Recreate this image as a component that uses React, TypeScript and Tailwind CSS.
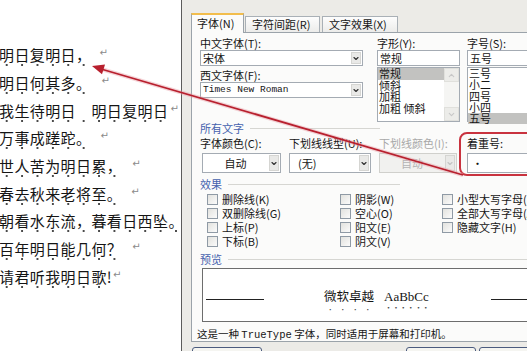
import React from 'react';
import { ChevronDown, ChevronUp } from 'lucide-react';

const poem = [
  { t: '明日复明日，', g: 'ml-[8px]' },
  { t: '明日何其多。', g: 'ml-[10px]' },
  { t: '我生待明日　明日复明日', g: 'ml-[2px]' },
  { t: '万事成蹉跎。', g: 'ml-[9px]' },
  { t: '世人苦为明日累，', g: 'ml-[10px]' },
  { t: '春去秋来老将至。', g: 'ml-[9px]' },
  { t: '朝看水东流，暮看日西坠。', g: 'hidden' },
  { t: '百年明日能几何？', g: 'ml-[10px]' },
  { t: '请君听我明日歌!', g: 'ml-[1px]' },
];

const dots = '[text-emphasis:filled_dot_#3a3a3a] [text-emphasis-position:under_right]';

const Arrow = ({ gray }: { gray?: boolean }) => (
  <div className="w-[10px] m-px flex items-center justify-center bg-[#e9e9e7] border border-[#d5d5d2]">
    <ChevronDown size={9} strokeWidth={3.5} color={gray ? '#c4c4c4' : '#333'} />
  </div>
);

const Check = ({ label }: { label: string }) => (
  <div className="flex items-center h-[14px] whitespace-nowrap">
    <span className="w-[11px] h-[11px] shrink-0 border border-[#8f9aa5] bg-linear-to-br from-[#e2e2de] to-[#fbfbfb]" />
    <span className="ml-[4px] text-[11px] leading-[14px]">{label}</span>
  </div>
);

const Group = ({ label }: { label: string }) => (
  <div className="flex items-center h-[14px]">
    <span className="text-[11px] text-[#4562ae]">{label}</span>
    <span className="flex-1 ml-[6px] h-px bg-[#d6d6d2]" />
  </div>
);

export default function App() {
  return (
    <div className="relative w-[527px] h-[351px] overflow-hidden flex bg-white text-[#151515] font-['Noto_Sans_CJK_SC','Noto_Sans',sans-serif]">
      {/* document */}
      <div className="w-[182px] shrink-0 pt-[43px] -ml-[1px] text-[15px] tracking-[0.4px]">
        {poem.map((l) => (
          <div key={l.t} className="h-[27.7px] whitespace-nowrap flex items-center">
            <span className="inline-block leading-[18px] pb-[3px] bg-[radial-gradient(circle,#4a4a4a_1px,transparent_1.4px)] bg-size-[15.4px_4px] bg-repeat-x bg-[position:0_100%]">{l.t}</span>
            <span className={`${l.g} -mt-[8px] text-[10px] text-[#8a8a8a] font-['DejaVu_Sans',sans-serif]`}>↵</span>
          </div>
        ))}
      </div>

      {/* dialog */}
      <div className="flex-1 flex flex-col bg-[#ecebe7] border-l border-[#5c5c5c] pl-[9px]">
        <div className="h-[13px] shrink-0" />
        <div className="flex items-end h-[19px] shrink-0 text-[11px] whitespace-nowrap">
          <div className="relative z-10 -mb-px w-[53px] h-[20px] border border-b-0 border-t-2 border-[#9ba3aa] border-t-[#f2bd4c] bg-[#fbfbfa] pl-[5px] leading-[16px]">字体(N)</div>
          <div className="ml-px w-[75px] h-[16px] border border-b-0 border-[#a9b0b6] bg-linear-to-b from-[#fdfdfd] to-[#ececea] pl-[6px] leading-[15px]">字符间距(R)</div>
          <div className="ml-[2px] w-[76px] h-[16px] border border-b-0 border-[#a9b0b6] bg-linear-to-b from-[#fdfdfd] to-[#ececea] pl-[6px] leading-[15px]">文字效果(X)</div>
        </div>

        <div className="w-[380px] h-[310px] shrink-0 border border-[#9ba3aa] bg-[#fbfbfa] pl-[8px] pt-[3px] text-[11px]">
          {/* fonts */}
          <div className="flex items-start">
            <div className="w-[163px] shrink-0">
              <div className="h-[14px] leading-[14px]">中文字体(T):</div>
              <div className="h-[16px] flex border border-[#a4abb3] bg-white">
                <span className="flex-1 pl-[2px] leading-[14px]">宋体</span>
                <Arrow />
              </div>
              <div className="mt-[2px] h-[14px] leading-[14px]">西文字体(F):</div>
              <div className="h-[16px] flex border border-[#a4abb3] bg-white">
                <span className="flex-1 pl-[2px] leading-[14px] text-[9.5px] font-['Liberation_Mono',monospace]">Times New Roman</span>
                <Arrow />
              </div>
            </div>
            <div className="ml-[14px] w-[83px] shrink-0">
              <div className="h-[14px] leading-[14px]">字形(Y):</div>
              <div className="h-[16px] border border-[#a4abb3] bg-white pl-[2px] leading-[14px]">常规</div>
              <div className="mt-px h-[55px] flex border border-[#a4abb3] bg-white">
                <div className="flex-1 flex flex-col leading-[11.5px] whitespace-nowrap">
                  <div className="bg-[#c2c2c0] pl-px">常规</div>
                  <div className="pl-px">倾斜</div>
                  <div className="pl-px">加粗</div>
                  <div className="pl-px">加粗 倾斜</div>
                </div>
                <div className="w-[15px] flex flex-col justify-between bg-[#f5f5f3]">
                  <div className="h-[14px] flex items-center justify-center bg-[#ecece9] border border-[#e0e0dc]">
                    <ChevronUp size={9} strokeWidth={3} color="#c8c8c8" />
                  </div>
                  <div className="h-[14px] flex items-center justify-center bg-[#ecece9] border border-[#e0e0dc]">
                    <ChevronDown size={9} strokeWidth={3} color="#c8c8c8" />
                  </div>
                </div>
              </div>
            </div>
            <div className="ml-[7px] w-[80px] shrink-0">
              <div className="h-[14px] leading-[14px]">字号(S):</div>
              <div className="h-[16px] border border-[#a4abb3] bg-white pl-[2px] leading-[14px]">五号</div>
              <div className="mt-px h-[55px] flex flex-col border border-[#a4abb3] bg-white leading-[11.3px]">
                <div className="pl-px">三号</div>
                <div className="pl-px">小二</div>
                <div className="pl-px">四号</div>
                <div className="pl-px">小四</div>
                <div className="bg-[#c2c2c0] pl-px">五号</div>
              </div>
            </div>
          </div>

          {/* all text */}
          <div className="mt-[-1px] w-[180px]"><Group label="所有文字" /></div>
          <div className="flex mt-px whitespace-nowrap">
            <div className="w-[89px] shrink-0">
              <div className="h-[14px] leading-[14px]">字体颜色(C):</div>
              <div className="ml-[2px] mt-[3px] w-[79px] h-[20px] flex border border-[#a4abb3] bg-white">
                <span className="flex-1 text-center leading-[18px]">自动</span>
                <Arrow />
              </div>
            </div>
            <div className="w-[90px] shrink-0">
              <div className="h-[14px] leading-[14px]">下划线线型(U):</div>
              <div className="mt-[3px] w-[82px] h-[20px] flex border border-[#a4abb3] bg-white">
                <span className="flex-1 pl-[8px] leading-[18px]">(无)</span>
                <Arrow />
              </div>
            </div>
            <div className="w-[88px] shrink-0">
              <div className="h-[14px] leading-[14px] text-[#a8a8a8]">下划线颜色(I):</div>
              <div className="mt-[3px] w-[78px] h-[20px] flex border border-[#d0d0cc] bg-[#f1f1ef]">
                <span className="flex-1 text-center leading-[18px] text-[#b4b4b4]">自动</span>
                <Arrow gray />
              </div>
            </div>
            <div className="w-[80px] shrink-0">
              <div className="h-[14px] leading-[14px]">着重号:</div>
              <div className="mt-[3px] w-[80px] h-[20px] border border-[#a4abb3] bg-white pl-[4px] leading-[18px]">•</div>
            </div>
          </div>

          {/* effects */}
          <div className="mt-[4px] w-[200px]"><Group label="效果" /></div>
          <div className="flex mt-px">
            <div className="w-[140px] shrink-0 pl-[7px]">
              <Check label="删除线(K)" />
              <Check label="双删除线(G)" />
              <Check label="上标(P)" />
              <Check label="下标(B)" />
            </div>
            <div className="w-[102px] shrink-0">
              <Check label="阴影(W)" />
              <Check label="空心(O)" />
              <Check label="阳文(E)" />
              <Check label="阴文(V)" />
            </div>
            <div className="shrink-0">
              <Check label="小型大写字母(M)" />
              <Check label="全部大写字母(A)" />
              <Check label="隐藏文字(H)" />
            </div>
          </div>

          {/* preview */}
          <div className="mt-[4px]"><Group label="预览" /></div>
          <div className="ml-[2px] mt-[2px] h-[54px] flex items-center border border-[#6d6d6d] bg-white whitespace-nowrap">
            <span className="ml-[3px] mt-[9px] w-[58px] h-px shrink-0 bg-[#222]" />
            <span className={`ml-[60px] mt-[9px] shrink-0 text-[12.5px] ${dots}`}>微软卓越</span>
            <span className={`ml-[10px] mt-[9px] shrink-0 text-[13px] font-['Liberation_Serif',serif] ${dots}`}>AaBbCc</span>
            <span className="ml-[62px] mt-[9px] w-[100px] h-px shrink-0 bg-[#222]" />
          </div>
          <div className="-ml-[3px] mt-[5px] h-[14px] leading-[14px] text-[10.5px] whitespace-nowrap">
            这是一种 <span className="font-['Liberation_Mono',monospace]">TrueType</span> 字体，同时适用于屏幕和打印机。
          </div>
        </div>

        <div className="flex mt-[5px] shrink-0">
          <div className="ml-px w-[70px] h-[20px] shrink-0 rounded-[3px] border border-[#4b5b7e] bg-[#f5f5f1]" />
          <div className="ml-[144px] w-[70px] h-[20px] shrink-0 rounded-[3px] border border-[#4b5b7e] bg-[#f5f5f1]" />
          <div className="ml-[3px] w-[70px] h-[20px] shrink-0 rounded-[3px] border border-[#4b5b7e] bg-[#f5f5f1]" />
        </div>
      </div>

      {/* annotation */}
      <svg className="absolute left-0 top-0 pointer-events-none" width="527" height="351">
        <rect x="460" y="133" width="90" height="42" rx="7" fill="none" stroke="#c9333f" strokeWidth="2" />
        <line x1="463" y1="175" x2="101" y2="69" stroke="#e9a2aa" strokeWidth="4" opacity="0.45" />
        <line x1="463" y1="175" x2="101" y2="69" stroke="#b8202e" strokeWidth="1.8" />
        <polygon points="92,66 105,64.6 102,74.2" fill="#b8202e" />
      </svg>
    </div>
  );
}
